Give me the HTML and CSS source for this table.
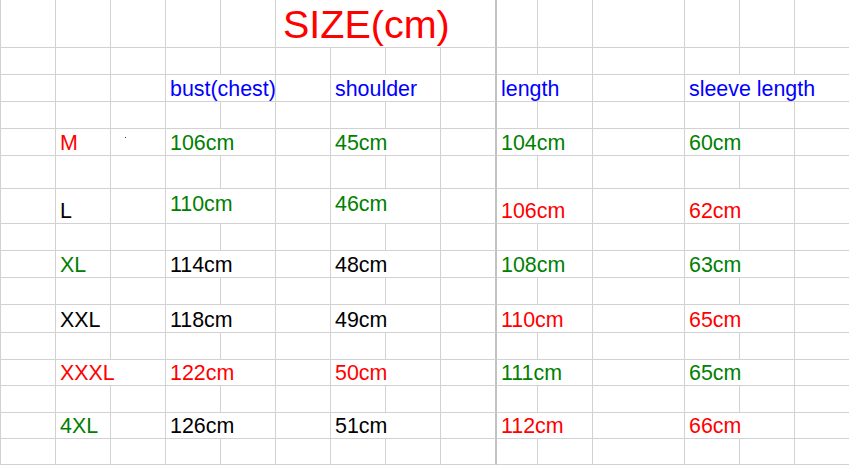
FILE: index.html
```html
<!DOCTYPE html>
<html>
<head>
<meta charset="utf-8">
<link rel="stylesheet" href="styles.css">
</head>
<body>
<div class="sheet">
  <!-- row 1 -->
  <div class="c"></div><div class="c"></div><div class="c"></div><div class="c"></div><div class="c"></div>
  <div class="c s4 pg title">SIZE(cm)</div>
  <div class="c"></div><div class="c"></div><div class="c"></div><div class="c"></div><div class="c"></div><div class="c"></div>
  <!-- row 2 -->
  <div class="c"></div><div class="c"></div><div class="c"></div><div class="c"></div><div class="c"></div><div class="c"></div><div class="c"></div><div class="c"></div><div class="c pg"></div><div class="c"></div><div class="c"></div><div class="c"></div><div class="c"></div><div class="c"></div><div class="c"></div>
  <!-- row 3 header -->
  <div class="c"></div><div class="c"></div><div class="c"></div>
  <div class="c s2 b">bust(chest)</div><div class="c"></div>
  <div class="c s2 b">shoulder</div><div class="c pg"></div>
  <div class="c s2 b">length</div><div class="c"></div>
  <div class="c s3 b">sleeve length</div>
  <!-- row 4 -->
  <div class="c"></div><div class="c"></div><div class="c"></div><div class="c"></div><div class="c"></div><div class="c"></div><div class="c"></div><div class="c"></div><div class="c pg"></div><div class="c"></div><div class="c"></div><div class="c"></div><div class="c"></div><div class="c"></div><div class="c"></div>
  <!-- row 5 M -->
  <div class="c"></div><div class="c r">M</div><div class="c dotcell"><span class="dot"></span></div>
  <div class="c s2 g">106cm</div><div class="c"></div>
  <div class="c s2 g">45cm</div><div class="c pg"></div>
  <div class="c s2 g">104cm</div><div class="c"></div>
  <div class="c s2 g">60cm</div><div class="c"></div>
  <!-- row 6 -->
  <div class="c"></div><div class="c"></div><div class="c"></div><div class="c"></div><div class="c"></div><div class="c"></div><div class="c"></div><div class="c"></div><div class="c pg"></div><div class="c"></div><div class="c"></div><div class="c"></div><div class="c"></div><div class="c"></div><div class="c"></div>
  <!-- row 7 L -->
  <div class="c"></div><div class="c k">L</div><div class="c"></div>
  <div class="c s2 g up">110cm</div><div class="c"></div>
  <div class="c s2 g up">46cm</div><div class="c pg"></div>
  <div class="c s2 r">106cm</div><div class="c"></div>
  <div class="c s2 r">62cm</div><div class="c"></div>
  <!-- row 8 -->
  <div class="c"></div><div class="c"></div><div class="c"></div><div class="c"></div><div class="c"></div><div class="c"></div><div class="c"></div><div class="c"></div><div class="c pg"></div><div class="c"></div><div class="c"></div><div class="c"></div><div class="c"></div><div class="c"></div><div class="c"></div>
  <!-- row 9 XL -->
  <div class="c"></div><div class="c g">XL</div><div class="c"></div>
  <div class="c s2 k">114cm</div><div class="c"></div>
  <div class="c s2 k">48cm</div><div class="c pg"></div>
  <div class="c s2 g">108cm</div><div class="c"></div>
  <div class="c s2 g">63cm</div><div class="c"></div>
  <!-- row 10 -->
  <div class="c"></div><div class="c"></div><div class="c"></div><div class="c"></div><div class="c"></div><div class="c"></div><div class="c"></div><div class="c"></div><div class="c pg"></div><div class="c"></div><div class="c"></div><div class="c"></div><div class="c"></div><div class="c"></div><div class="c"></div>
  <!-- row 11 XXL -->
  <div class="c"></div><div class="c k">XXL</div><div class="c"></div>
  <div class="c s2 k">118cm</div><div class="c"></div>
  <div class="c s2 k">49cm</div><div class="c pg"></div>
  <div class="c s2 r">110cm</div><div class="c"></div>
  <div class="c s2 r">65cm</div><div class="c"></div>
  <!-- row 12 -->
  <div class="c"></div><div class="c"></div><div class="c"></div><div class="c"></div><div class="c"></div><div class="c"></div><div class="c"></div><div class="c"></div><div class="c pg"></div><div class="c"></div><div class="c"></div><div class="c"></div><div class="c"></div><div class="c"></div><div class="c"></div>
  <!-- row 13 XXXL -->
  <div class="c"></div><div class="c s2 r">XXXL</div>
  <div class="c s2 r">122cm</div><div class="c"></div>
  <div class="c s2 r">50cm</div><div class="c pg"></div>
  <div class="c s2 g">111cm</div><div class="c"></div>
  <div class="c s2 g">65cm</div><div class="c"></div>
  <!-- row 14 -->
  <div class="c"></div><div class="c"></div><div class="c"></div><div class="c"></div><div class="c"></div><div class="c"></div><div class="c"></div><div class="c"></div><div class="c pg"></div><div class="c"></div><div class="c"></div><div class="c"></div><div class="c"></div><div class="c"></div><div class="c"></div>
  <!-- row 15 4XL -->
  <div class="c"></div><div class="c g">4XL</div><div class="c"></div>
  <div class="c s2 k">126cm</div><div class="c"></div>
  <div class="c s2 k">51cm</div><div class="c pg"></div>
  <div class="c s2 r">112cm</div><div class="c"></div>
  <div class="c s2 r">66cm</div><div class="c"></div>
  <!-- row 16 -->
  <div class="c"></div><div class="c"></div><div class="c"></div><div class="c"></div><div class="c"></div><div class="c"></div><div class="c"></div><div class="c"></div><div class="c pg"></div><div class="c"></div><div class="c"></div><div class="c"></div><div class="c"></div><div class="c"></div><div class="c"></div>
</div>
</body>
</html>
```

FILE: styles.css
```css
html, body {
  margin: 0;
  padding: 0;
  background: #ffffff;
  overflow: hidden;
}

.sheet {
  display: grid;
  width: max-content;
  border-left: 1px solid #d2d2d2;
  grid-template-columns: 55px 55px 55px 55px 55px 55px 55px 55px 56px 41px 55px 92px 55px 55px 55px;
  grid-template-rows: 48px 27px 27px 27px 27px 33px 35px 27px 27px 27px 28px 27px 26px 27px 26px 26px;
  font-family: "Liberation Sans", Arial, sans-serif;
  font-size: 21.4px;
  line-height: 24px;
}

.c {
  box-sizing: border-box;
  min-width: 0;
  border-right: 1px solid #d2d2d2;
  border-bottom: 1px solid #d2d2d2;
  display: flex;
  align-items: flex-end;
  padding-left: 4px;
  white-space: nowrap;
}

.pg {
  border-right: 2px solid #c2c2c2;
}

.s2 { grid-column: span 2; }
.s3 { grid-column: span 3; }
.s4 { grid-column: span 4; }

.title {
  color: #ff0000;
  font-size: 39.5px;
  line-height: 39px;
  padding-left: 7px;
  padding-bottom: 3px;
}

.up { padding-bottom: 7px; }

.r { color: #ff0000; }
.g { color: #008000; }
.b { color: #0000ff; }
.k { color: #000000; }

.dotcell { align-items: flex-start; }
.dot {
  display: block;
  width: 1px;
  height: 1px;
  margin-left: 10px;
  margin-top: 8px;
  background: #333333;
}
```
